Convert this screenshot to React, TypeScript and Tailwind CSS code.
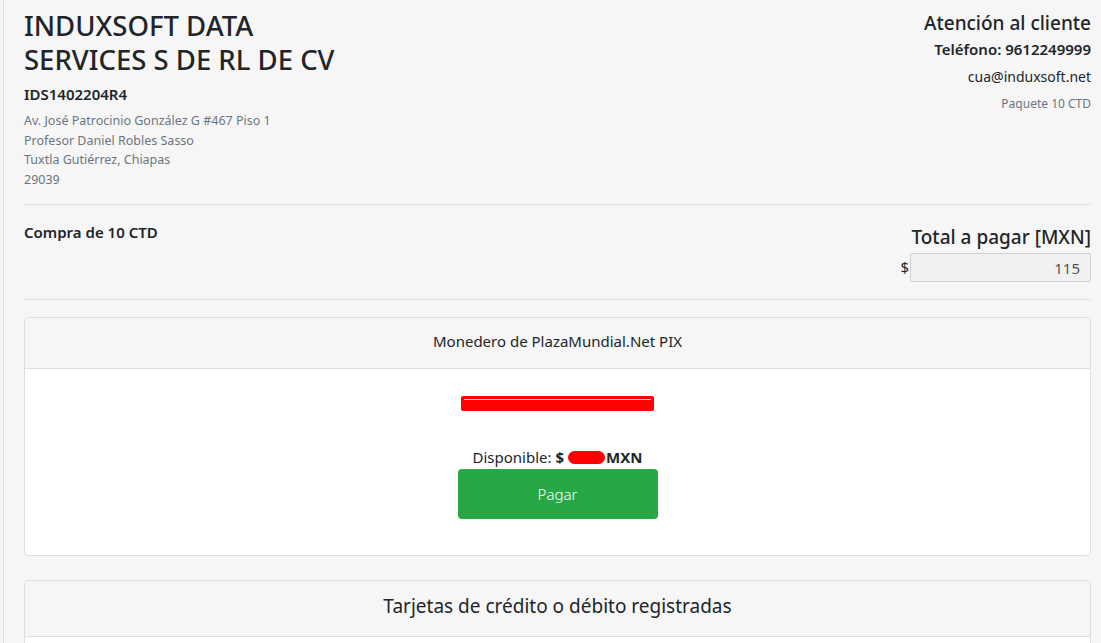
export default function App() {
  return (
    <div className="min-h-screen bg-[#f6f6f6] pl-[3px] font-['Noto_Sans',sans-serif] text-[#212529]">
      <div className="min-h-screen border-l border-[#dcdcdc] pl-[20px] pr-[10px] pt-[9px]">
        {/* Header */}
        <div className="flex justify-between">
          <div>
            <h3 className="text-[27.5px] leading-[34px] font-medium">
              <div>INDUXSOFT DATA</div>
              <div>SERVICES S DE RL DE CV</div>
            </h3>
            <h6 className="mt-[8px] text-[15px] leading-[18px] font-semibold">IDS1402204R4</h6>
            <div className="mt-[8px] text-[12.5px] leading-[19.5px] text-[#6c757d]">
              <div>Av. José Patrocinio González G #467 Piso 1</div>
              <div>Profesor Daniel Robles Sasso</div>
              <div>Tuxtla Gutiérrez, Chiapas</div>
              <div>29039</div>
            </div>
          </div>
          <div className="flex flex-col items-end pt-[2px]">
            <h5 className="text-[19px] leading-[24px] font-medium">Atención al cliente</h5>
            <h6 className="mt-[4px] text-[15px] leading-[20px] font-semibold">Teléfono: 9612249999</h6>
            <div className="mt-[8px] text-[14px] leading-[20px]">cua@induxsoft.net</div>
            <small className="mt-[8px] text-[12px] leading-[18px] text-[#6c757d]">Paquete 10 CTD</small>
          </div>
        </div>

        <hr className="mt-[15px] border-t border-[#dedede]" />

        {/* Compra */}
        <div className="flex justify-between pt-[18px] pb-[16px]">
          <div className="-mt-[2px] text-[15px] font-semibold">Compra de 10 CTD</div>
          <div className="flex flex-col items-end">
            <div className="text-[19px] leading-[28px] font-medium">Total a pagar [MXN]</div>
            <div className="flex items-center mt-[2px]">
              <span className="text-[15px] mr-[1px]">$</span>
              <input
                readOnly
                value="115"
                className="w-[181px] h-[29px] border border-[#cfcfcf] bg-[#f1f1f1] rounded-[2px] px-[10px] text-right text-[15px] text-[#555]"
              />
            </div>
          </div>
        </div>

        <hr className="mt-[1px] border-t border-[#dedede]" />

        {/* Monedero */}
        <div className="mt-[17px] border border-[#dfdfdf] rounded-[4px] bg-white overflow-hidden">
          <div className="h-[51px] flex items-center justify-center bg-[#f6f6f6] border-b border-[#dfdfdf] text-[15px] pb-[4px]">
            Monedero de PlazaMundial.Net PIX
          </div>
          <div className="flex flex-col items-center pt-[27px] pb-[36px]">
            <div className="relative w-[193px] h-[15px] bg-[#ff0000] rounded-[2px]">
              <div className="absolute left-[3px] right-[3px] top-[3px] h-px bg-white/80" />
            </div>
            <div className="mt-[35px] text-[15px] leading-[22px] flex items-center">
              <span>Disponible:</span>
              <b className="ml-[4px]">$</b>
              <span className="ml-[4px] inline-block w-[37px] h-[13px] bg-[#ff0000] rounded-full" />
              <b className="ml-[1px]">MXN</b>
            </div>
            <button className="mt-[1px] w-[200px] h-[50px] rounded-[4px] bg-[#28a745] text-white text-[15px] font-light">
              Pagar
            </button>
          </div>
        </div>

        {/* Tarjetas */}
        <div className="mt-[24px] border border-[#dfdfdf] rounded-[4px] bg-white overflow-hidden">
          <div className="h-[56px] flex items-center justify-center bg-[#f6f6f6] border-b border-[#dfdfdf] text-[19px] pb-[4px]">
            Tarjetas de crédito o débito registradas
          </div>
          <div className="h-[120px]" />
        </div>
      </div>
    </div>
  );
}
